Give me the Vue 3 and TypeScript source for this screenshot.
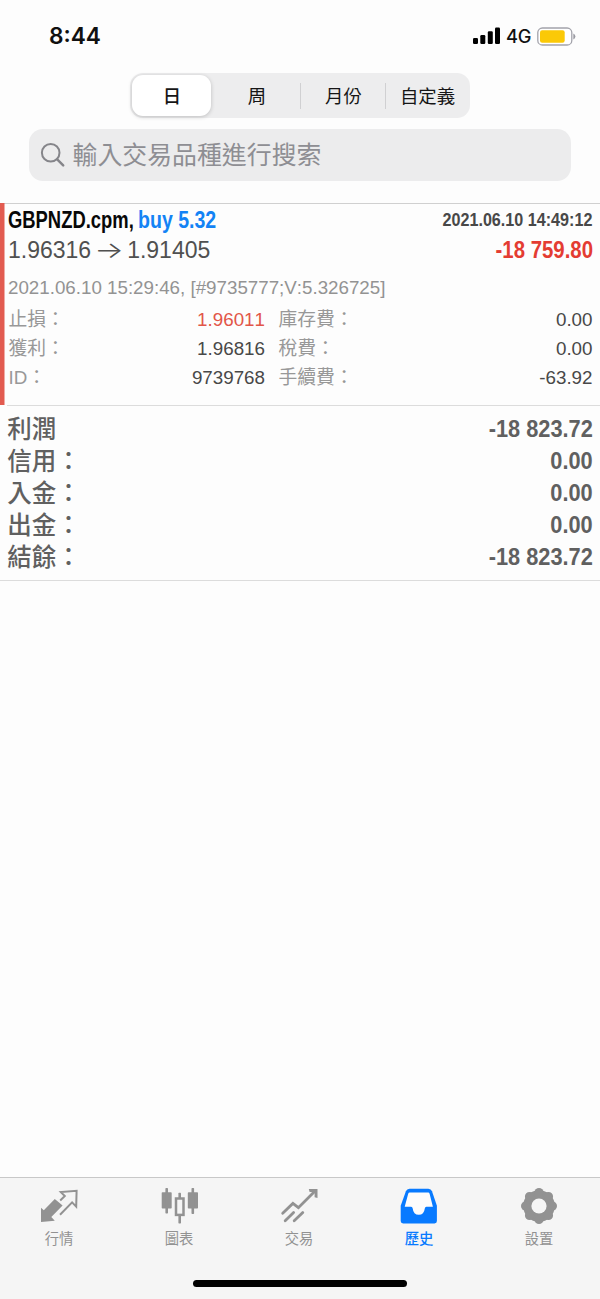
<script setup lang="ts">
interface Row { label: string; value: string; danger?: boolean }

const periods: string[] = ['日', '周', '月份', '自定義']
const left: Row[] = [
  { label: '止損：', value: '1.96011', danger: true },
  { label: '獲利：', value: '1.96816' },
  { label: 'ID：', value: '9739768' },
]
const right: Row[] = [
  { label: '庫存費：', value: '0.00' },
  { label: '稅費：', value: '0.00' },
  { label: '手續費：', value: '-63.92' },
]
const summary: Row[] = [
  { label: '利潤', value: '-18 823.72' },
  { label: '信用：', value: '0.00' },
  { label: '入金：', value: '0.00' },
  { label: '出金：', value: '0.00' },
  { label: '結餘：', value: '-18 823.72' },
]
const teeth: number[] = [0, 45, 90, 135, 180, 225, 270, 315]
</script>

<template>
  <div class="screen">
    <header class="status">
      <span class="time">8:44</span>
      <div class="indicators">
        <svg class="signal" width="28" height="18" viewBox="0 0 28 18">
          <rect x="0" y="11" width="5" height="6" rx="1.2" />
          <rect x="7.3" y="8" width="5" height="9" rx="1.2" />
          <rect x="14.8" y="4.3" width="5" height="12.7" rx="1.2" />
          <rect x="22" y="0.5" width="5" height="16.5" rx="1.2" />
        </svg>
        <span class="network">4G</span>
        <svg class="battery" width="39" height="19" viewBox="0 0 39 19">
          <rect x="0.8" y="1" width="34" height="17" rx="4.6" fill="#fff" stroke="#a3a3ab" stroke-width="1.3" />
          <rect x="3" y="3.2" width="24.7" height="12.6" rx="2.2" fill="#fbc907" />
          <path d="M36.3 6.5 Q38.4 7.5 38.4 9.5 Q38.4 11.5 36.3 12.5Z" fill="#9b9ba3" />
        </svg>
      </div>
    </header>

    <nav class="segments">
      <button v-for="(p, i) in periods" :key="p" class="segment" :class="{ active: i === 0, ruled: i > 1 }">{{ p }}</button>
    </nav>

    <div class="search">
      <svg width="26" height="26" viewBox="0 0 26 26" fill="none" stroke="#85858a" stroke-linecap="round">
        <circle cx="10.7" cy="10.8" r="8.8" stroke-width="2" />
        <path d="M17.2 17.4 L23.2 23.3" stroke-width="2.5" />
      </svg>
      <span class="placeholder">輸入交易品種進行搜索</span>
    </div>

    <section class="deal">
      <div class="line title-line">
        <div class="title">
          <span class="symbol">GBPNZD.cpm,</span>
          <span class="side">buy 5.32</span>
        </div>
        <span class="closed">2021.06.10 14:49:12</span>
      </div>
      <div class="line price-line">
        <span class="prices">1.96316<span class="arrow">→</span>1.91405</span>
        <span class="profit">-18 759.80</span>
      </div>
      <div class="opened">2021.06.10 15:29:46, [#9735777;V:5.326725]</div>
      <div class="details">
        <div class="column">
          <div v-for="r in left" :key="r.label" class="detail">
            <span class="label">{{ r.label }}</span>
            <span class="value" :class="{ danger: r.danger }">{{ r.value }}</span>
          </div>
        </div>
        <div class="column">
          <div v-for="r in right" :key="r.label" class="detail">
            <span class="label">{{ r.label }}</span>
            <span class="value">{{ r.value }}</span>
          </div>
        </div>
      </div>
    </section>

    <section class="summary">
      <div v-for="r in summary" :key="r.label" class="total">
        <span>{{ r.label }}</span>
        <span class="amount">{{ r.value }}</span>
      </div>
    </section>

    <footer class="tabbar">
      <div class="tabs">
        <div class="tab">
          <svg width="44" height="40" viewBox="0 0 44 40">
            <path d="M3 36 V21.7 L5.8 24.2 L16.8 12.9 L24.6 19.4 L13.3 30.9 L16.8 34.7Z" fill="#929292" />
            <path d="M22 28.7 L34.1 16.4 L38.2 20.6 L38.6 4.8 L22.8 6.1 L26.8 10.1 L22.2 14.4" fill="none" stroke="#929292" stroke-width="2" />
          </svg>
          <span>行情</span>
        </div>
        <div class="tab">
          <svg width="44" height="40" viewBox="0 0 44 40">
            <g fill="#929292">
              <rect x="3.7" y="6.3" width="10" height="16.2" rx="0.8" />
              <rect x="7.4" y="2" width="2.6" height="25.5" rx="0.7" />
              <rect x="29.8" y="6.3" width="10.2" height="16.2" rx="0.8" />
              <rect x="33.5" y="2" width="2.6" height="26" rx="0.7" />
              <rect x="20.4" y="6.7" width="2.6" height="5.5" rx="0.7" />
              <rect x="20.4" y="29" width="2.6" height="8.4" rx="0.7" />
            </g>
            <rect x="18" y="12.5" width="7.5" height="16.4" fill="none" stroke="#929292" stroke-width="2.5" />
          </svg>
          <span>圖表</span>
        </div>
        <div class="tab">
          <svg width="44" height="40" viewBox="0 0 44 40">
            <g fill="none" stroke="#929292" stroke-width="2.8" stroke-linecap="round">
              <path d="M4.7 27.3 L14.9 17.4 L20.4 21.7 L36.8 5.3" />
              <path d="M7.2 34.8 L15.6 26.6 M16.2 34.8 L24.8 26.6" />
            </g>
            <path d="M30.8 3 H39.5 V12 L36.6 11.2 V6 H31.6Z" fill="#929292" />
          </svg>
          <span>交易</span>
        </div>
        <div class="tab current">
          <svg width="44" height="40" viewBox="0 0 44 40">
            <path d="M11.5 2.8 H30.4 Q33 2.8 34 5.3 L38.9 19.8 V35 Q38.9 37.4 36.5 37.4 H5.1 Q2.7 37.4 2.7 35 V19.8 L7.9 5.3 Q8.9 2.8 11.5 2.8Z" fill="#087aff" />
            <path d="M11.7 6.6 H30.2 Q31.2 6.6 31.6 7.8 L34.9 20.8 H28.4 Q27 20.8 26.8 22.5 Q26 28.8 20.8 28.8 Q15.4 28.8 14.7 22.5 Q14.5 20.8 13.1 20.8 H6.7 L10.2 7.8 Q10.6 6.6 11.7 6.6Z" fill="#fcfcfc" />
          </svg>
          <span>歷史</span>
        </div>
        <div class="tab">
          <svg width="44" height="40" viewBox="0 0 44 40">
            <g fill="#929292">
              <circle cx="21" cy="20" r="15.8" />
              <circle v-for="a in teeth" :key="a" cx="21" cy="6.6" r="4.6" :transform="`rotate(${a} 21 20)`" />
            </g>
            <circle cx="21" cy="20" r="7.6" fill="#f5f5f5" />
          </svg>
          <span>設置</span>
        </div>
      </div>
      <div class="home"></div>
    </footer>
  </div>
</template>

<style>
body {
  margin: 0;
  background: #fdfdfd;
}
</style>

<style scoped>
.screen {
  width: 600px;
  height: 1299px;
  display: flex;
  flex-direction: column;
  background: #fdfdfd;
  font-family: "Liberation Sans", "Noto Sans CJK TC", sans-serif;
  font-kerning: none;
  white-space: nowrap;
  overflow: hidden;
}
.status {
  height: 73px;
  box-sizing: border-box;
  padding: 0 24px 0 49px;
  display: flex;
  justify-content: space-between;
  font-family: Inter, sans-serif;
  color: #101010;
}
.time {
  font-size: 22.7px;
  font-weight: 600;
  line-height: 72px;
}
.indicators {
  display: flex;
  align-items: center;
  height: 72px;
}
.network {
  font-size: 18.3px;
  font-weight: 500;
  width: 36px;
  padding-left: 5px;
  box-sizing: border-box;
  letter-spacing: -0.3px;
}
.segments {
  width: 340px;
  height: 45px;
  margin-left: 130px;
  padding: 2px;
  box-sizing: border-box;
  border-radius: 13px;
  background: #ededee;
  display: grid;
  grid-template-columns: 79px 89px 85px 83px;
  align-items: center;
  flex: none;
}
.segment {
  height: 41px;
  padding: 0 0 0 3px;
  border: 0;
  background: none;
  font: 400 18.4px/41px "Noto Sans CJK TC", sans-serif;
  color: #161616;
  position: relative;
}
.segment.active {
  padding-left: 1px;
  background: #fff;
  border-radius: 11px;
  font-weight: 500;
  box-shadow: 0 1px 4px rgba(0, 0, 0, 0.2);
}
.segment.ruled {
  padding-left: 2px;
}
.segment.ruled::before {
  content: "";
  position: absolute;
  left: 0;
  top: 8px;
  width: 1px;
  height: 26px;
  background: #d0d0d2;
}
.search {
  width: 542px;
  height: 52px;
  margin: 11px 0 22px 29px;
  padding-left: 11px;
  box-sizing: border-box;
  border-radius: 14px;
  background: #ececed;
  display: flex;
  align-items: center;
  gap: 6.5px;
  flex: none;
}
.placeholder {
  font: 400 24.9px/48px "Noto Sans CJK TC", sans-serif;
  color: #8e8e93;
  padding-bottom: 5px;
}
.deal {
  height: 203px;
  box-sizing: border-box;
  padding: 1px 7.5px 1px 8px;
  flex: none;
  background:
    linear-gradient(#e25b50, #e25b50) 0 0 / 4.5px 202px no-repeat,
    linear-gradient(#d0d0d0, #d0d0d0) 0 0 / 100% 1px no-repeat,
    linear-gradient(#dcdcdc, #dcdcdc) 7px 100% / 593px 1px no-repeat;
}
.line {
  display: flex;
  justify-content: space-between;
}
.title-line {
  height: 31px;
  line-height: 32px;
}
.title {
  display: flex;
  font-size: 23px;
  font-weight: 700;
}
.symbol {
  color: #080808;
  transform: scaleX(0.8);
  transform-origin: left;
}
.side {
  margin-left: -27px;
  color: #1383f5;
  transform: scaleX(0.85);
  transform-origin: left;
}
.closed {
  font-size: 19px;
  font-weight: 700;
  color: #484848;
  transform: scaleX(0.85);
  transform-origin: right;
}
.price-line {
  height: 30px;
  line-height: 31px;
}
.prices {
  font-size: 23px;
  color: #505050;
}
.arrow {
  display: inline-block;
  width: 36px;
  text-align: center;
  font-family: Inter, sans-serif;
  font-weight: 300;
  transform: scaleX(1.35);
}
.profit {
  font-size: 23px;
  font-weight: 700;
  color: #e43c32;
  transform: scaleX(0.886);
  transform-origin: right;
}
.opened {
  height: 38px;
  line-height: 46px;
  font-size: 18.75px;
  color: #939393;
}
.details {
  display: grid;
  grid-template-columns: 257px 314.5px;
  column-gap: 13px;
  padding-top: 1px;
}
.detail {
  height: 29px;
  line-height: 31px;
  display: flex;
  justify-content: space-between;
  font-size: 18.8px;
}
.label {
  color: #989898;
  padding-left: 0.5px;
}
.value {
  color: #484848;
}
.value.danger {
  color: #e25649;
}
.summary {
  height: 175px;
  box-sizing: border-box;
  padding: 6px 7.5px 0 7.3px;
  border-bottom: 1px solid #dcdcdc;
  flex: none;
}
.total {
  height: 32px;
  line-height: 32px;
  display: flex;
  justify-content: space-between;
  font-family: "Noto Sans CJK TC", sans-serif;
  font-size: 24.5px;
  font-weight: 500;
  color: #606060;
}
.amount {
  font-family: "Liberation Sans", sans-serif;
  font-size: 24px;
  line-height: 34px;
  font-weight: 700;
  transform: scaleX(0.907);
  transform-origin: right;
}
.tabbar {
  height: 122px;
  box-sizing: border-box;
  margin-top: auto;
  border-top: 1px solid #c8c8c8;
  background: #f5f5f5;
  padding-top: 8px;
}
.tabs {
  display: grid;
  grid-template-columns: repeat(5, 120px);
}
.tab {
  display: flex;
  flex-direction: column;
  align-items: center;
  height: 94px;
  font: 400 14.3px/24px "Noto Sans CJK TC", sans-serif;
  color: #929292;
}
.tab span {
  margin-right: 2px;
}
.tab.current {
  color: #087aff;
  font-weight: 500;
}
.home {
  width: 214px;
  height: 7px;
  margin: 0 auto;
  border-radius: 4px;
  background: #000;
}
</style>
